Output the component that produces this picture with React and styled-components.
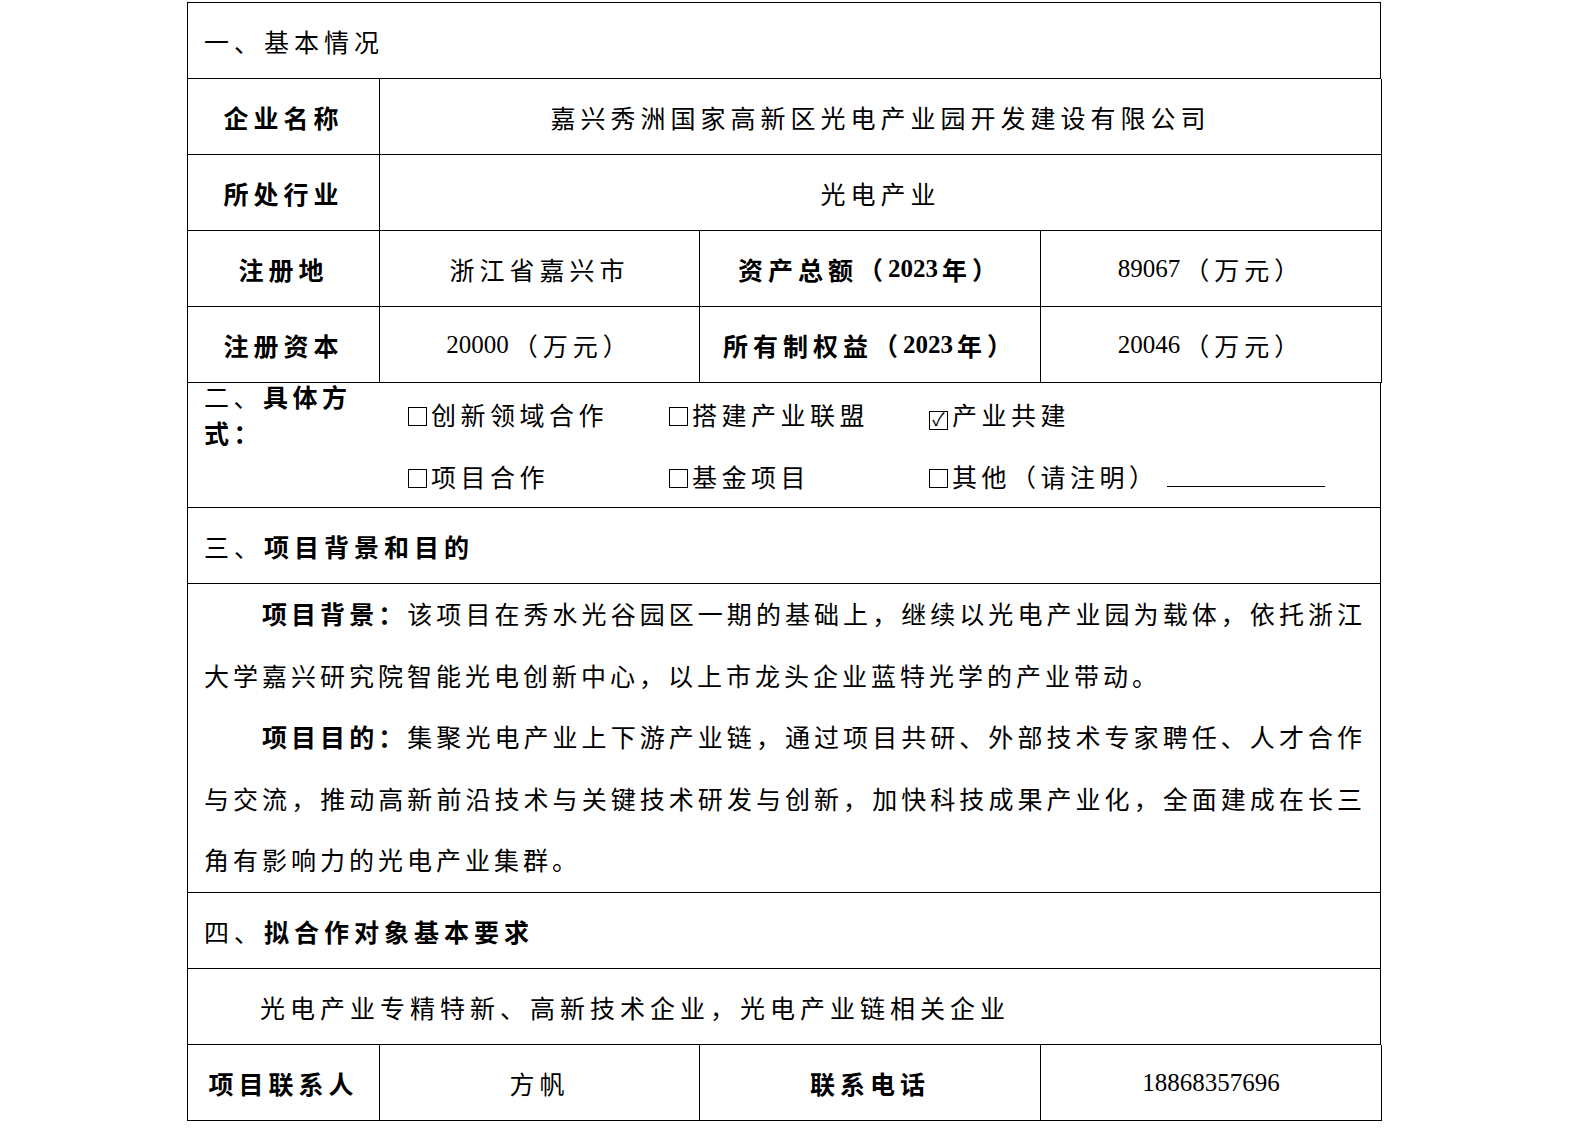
import React from "react";
import styled, { createGlobalStyle } from "styled-components";

const G = createGlobalStyle`
  html, body { overflow: hidden; }
  body { margin: 0; background: #fff; color: #000;
    font-family: "Liberation Serif", "Noto Sans CJK SC", serif; }
`;
const Sheet = styled.div`
  margin: 2px 0 0 187px; width: 1194px;
  border-top: 1.5px solid #000; border-left: 1.5px solid #000;
  box-sizing: border-box;
`;
const Row = styled.div`
  display: grid;
  grid-template-columns: ${p => p.$cols || "1fr"};
  height: 76px;
`;
const Cell = styled.div`
  border-right: 1.5px solid #000; border-bottom: 1.5px solid #000;
  display: flex; align-items: center;
  justify-content: ${p => (p.$left ? "flex-start" : "center")};
  padding: 0 ${p => (p.$left ? "16px" : "0")};
  font-size: 25px; letter-spacing: 5px;
  font-weight: ${p => (p.$bold ? 700 : 400)};
  box-sizing: border-box;
`;
const Num = styled.span`
  letter-spacing: 0; margin-right: 4px;
`;
const Para = styled.div`
  border-right: 1.5px solid #000; border-bottom: 1.5px solid #000;
  padding: 1px 14px 0 16px; font-size: 25px; letter-spacing: 4px;
  line-height: 61.5px; text-align: justify; height: 309px; box-sizing: border-box;
  p { margin: 0; text-indent: 58px; }
  b { font-weight: 700; }
`;
const Ways = styled.div`
  border-right: 1.5px solid #000; border-bottom: 1.5px solid #000;
  display: grid; grid-template-columns: 204px 261px 260px 1fr;
  grid-auto-rows: 62px; padding: 0 0 0 16px; align-items: center;
  font-size: 25px; letter-spacing: 4.5px; height: 125px; box-sizing: border-box;
`;
const Box = styled.span`
  display: inline-block; width: 19px; height: 19px; border: 1.5px solid #000;
  box-sizing: border-box; vertical-align: -1px; margin-right: 4px;
  font-size: 18px; line-height: 16px; text-align: center; letter-spacing: 0;
`;
const Blank = styled.span`
  display: inline-block; width: 158px; border-bottom: 1.2px solid #000; height: 22px;
  margin-left: 8px;
`;
const C4 = "192px 320px 341px 341px";
const C2 = "192px 1002px";

export default function App() {
  return (
    <>
      <G />
      <Sheet>
        <Row><Cell $left>一、基本情况</Cell></Row>
        <Row $cols={C2}><Cell $bold>企业名称</Cell><Cell>嘉兴秀洲国家高新区光电产业园开发建设有限公司</Cell></Row>
        <Row $cols={C2}><Cell $bold>所处行业</Cell><Cell>光电产业</Cell></Row>
        <Row $cols={C4}><Cell $bold>注册地</Cell><Cell>浙江省嘉兴市</Cell><Cell $bold>资产总额（<Num>2023</Num>年）</Cell><Cell><Num>89067</Num>（万元）</Cell></Row>
        <Row $cols={C4}><Cell $bold>注册资本</Cell><Cell><Num>20000</Num>（万元）</Cell><Cell $bold>所有制权益（<Num>2023</Num>年）</Cell><Cell><Num>20046</Num>（万元）</Cell></Row>
        <Ways>
          <b style={{ fontWeight: 700 }}><span style={{ fontWeight: 400 }}>二、</span>具体方式：</b>
          <span><Box />创新领域合作</span>
          <span><Box />搭建产业联盟</span>
          <span><Box>✓</Box>产业共建</span>
          <span />
          <span><Box />项目合作</span>
          <span><Box />基金项目</span>
          <span><Box />其他（请注明）<Blank /></span>
        </Ways>
        <Row><Cell $left>三、<b>项目背景和目的</b></Cell></Row>
        <Para>
          <p><b>项目背景：</b>该项目在秀水光谷园区一期的基础上，继续以光电产业园为载体，依托浙江大学嘉兴研究院智能光电创新中心，以上市龙头企业蓝特光学的产业带动。</p>
          <p><b>项目目的：</b>集聚光电产业上下游产业链，通过项目共研、外部技术专家聘任、人才合作与交流，推动高新前沿技术与关键技术研发与创新，加快科技成果产业化，全面建成在长三角有影响力的光电产业集群。</p>
        </Para>
        <Row><Cell $left>四、<b>拟合作对象基本要求</b></Cell></Row>
        <Row><Cell $left style={{ paddingLeft: 72 }}>光电产业专精特新、高新技术企业，光电产业链相关企业</Cell></Row>
        <Row $cols={C4}><Cell $bold>项目联系人</Cell><Cell>方帆</Cell><Cell $bold>联系电话</Cell><Cell style={{ letterSpacing: 0 }}>18868357696</Cell></Row>
      </Sheet>
    </>
  );
}
